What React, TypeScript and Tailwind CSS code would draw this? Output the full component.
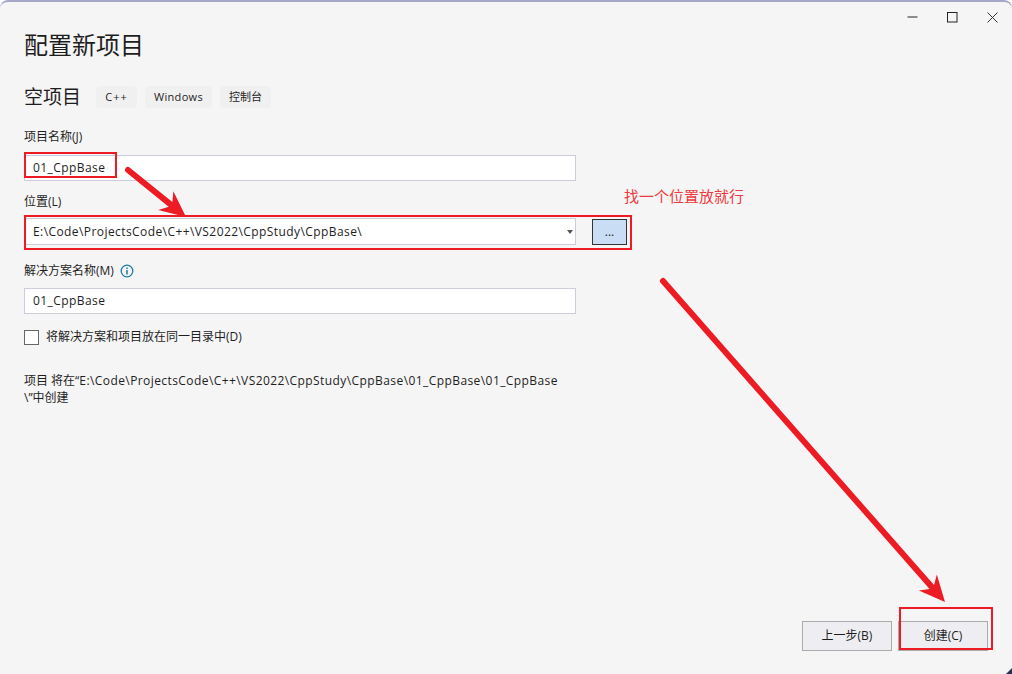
const font = { fontFamily: '"Open Sans","Noto Sans CJK SC",sans-serif' };

function Arrow({ x1, y1, x2, y2, w = 6 }: { x1: number; y1: number; x2: number; y2: number; w?: number }) {
  const dx = x2 - x1, dy = y2 - y1, l = Math.hypot(dx, dy), ux = dx / l, uy = dy / l;
  const hl = 26, hw = 12, notch = 18;
  const bx = x2 - ux * hl, by = y2 - uy * hl;
  const nx = x2 - ux * notch, ny = y2 - uy * notch;
  return (
    <g>
      <line x1={x1} y1={y1} x2={nx} y2={ny} stroke="#ed1c24" strokeWidth={w} strokeLinecap="round" />
      <polygon fill="#ed1c24" points={`${x2},${y2} ${bx - uy * hw},${by + ux * hw} ${nx},${ny} ${bx + uy * hw},${by - ux * hw}`} />
    </g>
  );
}

function Tag({ children, className = "" }: { children: React.ReactNode; className?: string }) {
  return (
    <span className={`h-[22px] px-[9px] flex items-center bg-[#f0f0f0] rounded-[4px] text-[11px] text-[#1e1e1e] ${className}`}>
      {children}
    </span>
  );
}

function Field({ children, className = "" }: { children: React.ReactNode; className?: string }) {
  return (
    <div className={`w-[552px] bg-white border border-[#ccccdc] flex items-center pl-2 text-[12px] text-[#1e1e1e] ${className}`}>
      {children}
    </div>
  );
}

export default function App() {
  return (
    <div className="relative w-[1012px] h-[674px] overflow-hidden bg-[#f5f5f5] border-t-2 border-[#a6a7c8] rounded-tl-[8px] rounded-tr-[8px]" style={font}>
      <div className="absolute top-[-2px] right-0 flex items-center h-[32px] gap-[29px] pr-[14px] pt-[2px]">
        <svg width="11" height="11" viewBox="0 0 11 11"><path d="M0.5 5H10.5" stroke="#222" /></svg>
        <svg width="11" height="11" viewBox="0 0 11 11"><rect x="0.5" y="0.5" width="9.5" height="9.5" fill="none" stroke="#222" /></svg>
        <svg width="11" height="11" viewBox="0 0 11 11"><path d="M0.5 0.5L10.5 10.5M10.5 0.5L0.5 10.5" stroke="#333" /></svg>
      </div>

      <div className="flex flex-col pl-6 pt-[25px] h-full">
        <h1 className="text-[24px] leading-[36px] text-[#1e1e1e] font-normal">配置新项目</h1>
        <div className="flex items-center mt-[22px] h-[24px]">
          <span className="text-[19px] text-[#1e1e1e] w-[72px]">空项目</span>
          <div className="flex gap-2">
            <Tag className="w-[41px] justify-center tracking-[1px]">C++</Tag>
            <Tag className="w-[67px] justify-center tracking-[0.32px]">Windows</Tag>
            <Tag className="w-[51px] justify-center">控制台</Tag>
          </div>
        </div>
        <label className="mt-[19px] h-[18px] leading-[18px] text-[12px] text-[#1e1e1e]">项目名称(J)</label>
        <Field className="mt-[9px] h-[26px] tracking-[0.42px]">01_CppBase</Field>
        <label className="mt-[12px] h-[18px] leading-[18px] text-[12px] text-[#1e1e1e]">位置(L)</label>
        <div className="flex items-center mt-[7px] gap-4 h-[27px]">
          <Field className="h-[27px] justify-between pr-[2px]">
            <span className="tracking-[0.42px]">E:\Code\ProjectsCode\C++\VS2022\CppStudy\CppBase\</span>
            <span className="w-0 h-0 border-x-[3px] border-x-transparent border-t-[4px] border-t-[#555]" />
          </Field>
          <button className="w-[35px] h-[26px] bg-[#c9def5] border border-[#333] text-[12px] text-[#1e1e1e]">...</button>
        </div>
        <div className="flex items-center gap-[6px] mt-[17px] h-[18px]">
          <label className="leading-[18px] text-[12px] text-[#1e1e1e]">解决方案名称(M)</label>
          <svg width="14" height="14" viewBox="0 0 14 14">
            <circle cx="7" cy="7" r="5.8" fill="none" stroke="#1b7aa8" strokeWidth="1.3" />
            <path d="M7 6V10.5M7 3.5V5" stroke="#1b7aa8" strokeWidth="1.5" />
          </svg>
        </div>
        <Field className="mt-[8px] h-[26px] tracking-[0.42px]">01_CppBase</Field>
        <div className="flex items-center mt-[14px] h-[18px] gap-[7px]">
          <span className="w-[15px] h-[15px] bg-white border border-[#666]" />
          <span className="text-[12px] text-[#1e1e1e]">将解决方案和项目放在同一目录中(D)</span>
        </div>
        <p className="mt-[26px] w-[552px] text-[12px] leading-[17px] text-[#1e1e1e]">
          项目 将在“<span className="tracking-[0.42px]">E:\Code\ProjectsCode\C++\VS2022\CppStudy\CppBase\01_CppBase\01_CppBase</span>
          <br />\”中创建
        </p>
        <div className="mt-auto mb-[23px] self-end flex gap-[6px] pr-6">
          <button className="w-[90px] h-[30px] bg-[#eeeef2] border border-[#acacac] text-[12px] text-[#1e1e1e]">上一步(B)</button>
          <button className="w-[90px] h-[30px] bg-[#eeeef2] border border-[#acacac] text-[12px] text-[#1e1e1e]">创建(C)</button>
        </div>
      </div>

      {/* red annotations */}
      <div className="absolute left-[24px] top-[150px] w-[93px] h-[26px] border-2 border-[#ed1c24]" />
      <div className="absolute left-[24px] top-[213px] w-[608px] h-[35px] border-2 border-[#ed1c24]" />
      <div className="absolute left-[899px] top-[605px] w-[94px] h-[43px] border-2 border-[#ed1c24]" />
      <span className="absolute left-[624px] top-[184px] text-[15px] leading-[20px] text-[#ed3a40]">找一个位置放就行</span>
      <svg className="absolute left-0 top-[-2px]" width="1012" height="674">
        <Arrow x1={128} y1={170} x2={186} y2={217} />
        <Arrow x1={663} y1={281} x2={945} y2={602} />
      </svg>
      <div className="absolute right-0 bottom-0 w-[6px] h-[6px] bg-[#2a3050] [clip-path:polygon(100%_0,100%_100%,0_100%)]" />
      <div className="absolute right-0 top-[-2px] w-[6px] h-[6px] bg-[#2a3050] [clip-path:polygon(0_0,100%_0,100%_100%)]" />
    </div>
  );
}
